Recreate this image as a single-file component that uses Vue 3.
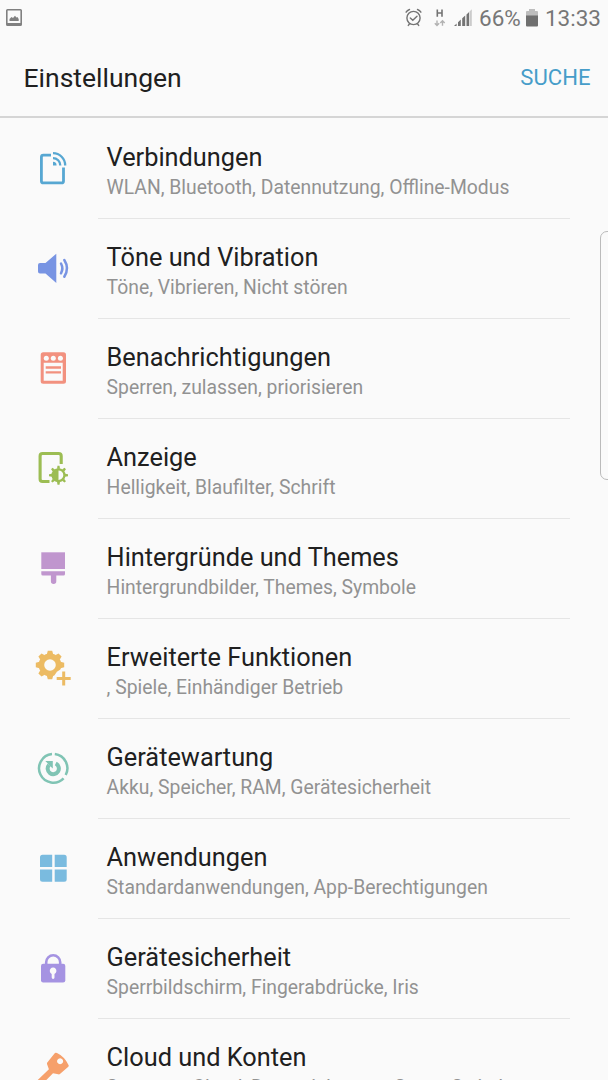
<script setup>
const entries = [
  { icon: 'connections', title: 'Verbindungen', sub: 'WLAN, Bluetooth, Datennutzung, Offline-Modus' },
  { icon: 'sound', title: 'Töne und Vibration', sub: 'Töne, Vibrieren, Nicht stören' },
  { icon: 'notifications', title: 'Benachrichtigungen', sub: 'Sperren, zulassen, priorisieren' },
  { icon: 'display', title: 'Anzeige', sub: 'Helligkeit, Blaufilter, Schrift' },
  { icon: 'themes', title: 'Hintergründe und Themes', sub: 'Hintergrundbilder, Themes, Symbole' },
  { icon: 'advanced', title: 'Erweiterte Funktionen', sub: ', Spiele, Einhändiger Betrieb' },
  { icon: 'maintenance', title: 'Gerätewartung', sub: 'Akku, Speicher, RAM, Gerätesicherheit' },
  { icon: 'apps', title: 'Anwendungen', sub: 'Standardanwendungen, App-Berechtigungen' },
  { icon: 'security', title: 'Gerätesicherheit', sub: 'Sperrbildschirm, Fingerabdrücke, Iris' },
  { icon: 'cloud', title: 'Cloud und Konten', sub: 'Samsung Cloud, Datensicherung, Smart Switch' },
]
const teeth = [0, 45, 90, 135, 180, 225, 270, 315]
</script>

<template>
  <div class="screen">
    <header class="status">
      <svg class="shot" width="16" height="18" viewBox="0 0 16 18">
        <path fill="#808080" fill-rule="evenodd" d="M1.500 0h13Q16 0 16 1.500v14Q16 17 14.500 17h-13Q0 17 0 15.500v-14Q0 0 1.500 0ZM1.600 1.500v12.500h12.800V1.500Z" />
        <path fill="#808080" d="M3.500 12V10l2-2 1.500 1 2-2.200 1.400 1.700 1-.5 1.300 2V12Z" />
      </svg>
      <svg class="signals" width="80" height="20" viewBox="0 0 80 20">
        <g fill="none" stroke="#737373" stroke-width="1.400" stroke-linecap="round">
          <circle cx="8.500" cy="10" r="6.600" />
          <path d="M5.300 9.900l2.500 2.400 4.200-4M4.600 15.700l-1.300 1.700M12.400 15.700l1.300 1.700M1.100 4.200Q2.200 2.200 4.500 1.500M12.500 1.500Q14.800 2.200 15.900 4.200" />
        </g>
        <path stroke="#737373" stroke-width="1.600" fill="none" d="M32.300 1.500v7.200M37 1.500v7.200M32.300 5h4.700" />
        <path stroke="#b2b2b2" stroke-width="1.400" fill="none" d="M32 12.500v5M29.800 15.300l2.200 2.200 2.200-2.200M37.500 17.700v-5M35.300 14.900l2.200-2.200 2.200 2.200" />
        <path fill="#737373" d="M49 18l2.600-2.500V18ZM53 14.300l2.800-2.700V18H53ZM57.200 10.300l3-2.800V18h-3ZM61.500 6.500l2.600-2.500V18h-2.600Z" />
        <path fill="#cbcbcb" d="M64.600 3.400L66.800 1.300V18h-2.200Z" />
      </svg>
      <span class="percent">66%</span>
      <svg class="battery" width="12" height="18" viewBox="0 0 12 18">
        <path fill="#bdbdbd" d="M3 0h6v2h2q1 0 1 1v4H0V3q0-1 1-1h2Z" />
        <path fill="#6f6f6f" d="M0 6.500h12V16.500q0 1-1 1H1q-1 0-1-1Z" />
      </svg>
      <span class="clock">13:33</span>
    </header>

    <div class="appbar">
      <h1>Einstellungen</h1>
      <span class="search">SUCHE</span>
    </div>

    <main>
      <section v-for="e in entries" :key="e.icon" class="row">
        <!-- icon boxes are 60px squares, 24px from the left edge -->
        <svg class="icon" width="60" height="60" viewBox="0 0 60 60">
          <g v-if="e.icon === 'connections'" fill="none" stroke="#57a7d2">
            <path stroke-width="2.800" d="M27 15.100H19.400Q17.400 15.100 17.400 17.100V40.900Q17.400 42.900 19.400 42.900H37.500Q39.500 42.900 39.500 40.900V27.500" />
            <path stroke-width="2.300" d="M29 13.200A12.200 12.200 0 0 1 41.200 25.400M29 18.100A7.300 7.300 0 0 1 36.300 25.400" />
            <path fill="#57a7d2" stroke="none" d="M29 21.800A3.600 3.600 0 0 1 32.600 25.400H29Z" />
          </g>

          <g v-else-if="e.icon === 'sound'">
            <path fill="#7894e3" d="M16 23h5.500L32.300 13.700V43L21.500 33.500H16q-2 0-2-2V25q0-2 2-2Z" />
            <path fill="none" stroke="#7894e3" stroke-width="2.500" stroke-linecap="round" d="M37 23.500Q39.700 28.400 37 33.300M40.300 20Q45.700 28.400 40.300 36.800" />
          </g>

          <g v-else-if="e.icon === 'notifications'">
            <path fill="#f2917f" fill-rule="evenodd" d="M19.200 12.300h20.300q2.500 0 2.500 2.500v26.400q0 2.500-2.500 2.500H19.200q-2.500 0-2.500-2.500V14.800q0-2.500 2.500-2.500ZM19.700 22.800v18h19v-18Z" />
            <g fill="#fafafa"><circle cx="22.300" cy="18.300" r="2.500" /><circle cx="29.300" cy="18.300" r="2.500" /><circle cx="36.400" cy="18.300" r="2.500" /></g>
            <path stroke="#f2917f" stroke-width="2.300" d="M21.700 27.500h15.300M21.700 32.400h15.300" />
          </g>

          <g v-else-if="e.icon === 'display'">
            <path fill="none" stroke="#9cbd53" stroke-width="3.100" d="M25.500 41.500H18.500Q16.100 41.500 16.100 39V16Q16.100 13.500 18.500 13.500H34.700Q37.200 13.500 37.200 16V24" />
            <g transform="translate(34.500 35.200)">
              <circle r="5.900" fill="none" stroke="#9cbd53" stroke-width="2.200" />
              <path fill="#9cbd53" d="M0-6A6 6 0 0 0 0 6Z" />
              <path v-for="a in teeth" :key="a" :transform="`rotate(${a})`" fill="#9cbd53" d="M-1.500-6.500L-1-9.500H1L1.500-6.500Z" />
            </g>
          </g>

          <g v-else-if="e.icon === 'themes'" fill="#c096ce">
            <path d="M17.300 12.300H41V29H17.300Z" />
            <path d="M17.300 31.300H41V34q0 1.500-1.500 1.500H32.300V41.300a2.700 2.700 0 0 1-5.400 0V35.500H18.800q-1.500 0-1.500-1.500Z" />
          </g>

          <g v-else-if="e.icon === 'advanced'">
            <g transform="translate(26 25)">
              <circle r="8.600" fill="none" stroke="#ecbb63" stroke-width="5.600" />
              <path v-for="a in teeth" :key="a" :transform="`rotate(${a})`" fill="#ecbb63" d="M-3.200-10.500L-2.200-14.200H2.200L3.200-10.500Z" />
            </g>
            <circle cx="39.700" cy="38.500" r="9.600" fill="#fafafa" />
            <path stroke="#ecbb63" stroke-width="3" d="M39.700 31.500v14M32.700 38.500h14" />
          </g>

          <g v-else-if="e.icon === 'maintenance'" fill="none" stroke="#80c4b4">
            <path stroke-width="2.500" d="M30.800 14.100A14.300 14.300 0 0 1 41.700 35M39.600 38.300A14.300 14.300 0 1 1 28 14.100" />
            <path stroke-width="4" d="M31.700 23.500A5.600 5.600 0 1 1 25.100 24.800" />
            <path fill="#80c4b4" stroke="none" d="M21.300 21H28.800V28.600L26 26 23.800 23.600Z" />
          </g>

          <path v-else-if="e.icon === 'apps'" fill="#7abbdf" d="M18.500 14.700H28.200V27H16V17.200Q16 14.700 18.500 14.700ZM30.700 14.700H40.200Q42.700 14.700 42.700 17.200V27H30.700ZM16 29.600H28.200V41.800H18.500Q16 41.800 16 39.300ZM30.700 29.600H42.700V39.300Q42.700 41.800 40.200 41.800H30.700Z" />

          <g v-else-if="e.icon === 'security'">
            <path fill="none" stroke="#a593e2" stroke-width="2.600" d="M22.200 25V22.300A7 7 0 0 1 36.200 22.300V25" />
            <rect x="17" y="23.800" width="24.300" height="18.600" rx="2.200" fill="#a593e2" />
            <path fill="#fafafa" d="M27.700 33.900A3.300 3.300 0 1 1 30.500 33.900V37.600a1.400 1.400 0 0 1-2.800 0Z" />
          </g>

          <path v-else fill="#f6a06b" fill-rule="evenodd" d="M31.600 12.700Q32.200 12.500 33 13 40.500 16.500 44.500 25 45 25.900 44.300 26.700L36.200 33.800Q35.300 34.600 34.300 34.300L29 33.200 14.500 48 7.500 46 24.900 29.300 23 24Q22.900 23.200 23.300 22.600L30.500 13.500Q31 12.900 31.600 12.700ZM36.100 18.300a3 3 0 1 0 .01 0Z" />
        </svg>
        <div class="text">
          <h2>{{ e.title }}</h2>
          <p>{{ e.sub }}</p>
        </div>
      </section>
    </main>
    <div class="edge"></div>
  </div>
</template>

<style>
body { background: #fafafa; }
</style>

<style scoped>
.screen {
  position: relative;
  width: 608px;
  height: 1080px;
  overflow: hidden;
  background: #fafafa;
  font-family: Roboto, "Liberation Sans", sans-serif;
  color: #202020;
}
.status {
  display: flex;
  height: 38px;
  box-sizing: border-box;
  padding: 8px 7px 0 6px;
  color: #777;
  font-size: 22.500px;
  line-height: 20px;
}
.shot { margin-top: 1px; }
.signals { margin-left: 383px; flex: none; }
.percent { margin-left: -6px; width: 46px; flex: none; }
.battery { margin-left: 1px; margin-top: 1px; flex: none; }
.clock { margin-left: auto; }
.appbar {
  display: flex;
  justify-content: space-between;
  align-items: center;
  height: 80px;
  box-sizing: border-box;
  padding: 2px 17.500px 0 23.500px;
  border-bottom: 2px solid #d5d5d5;
}
h1 { margin: 0; font-size: 26.500px; font-weight: 400; line-height: 32px; }
.search { margin-bottom: 2px; font-size: 22.100px; line-height: 28px; color: #469dc9; }
.row { display: flex; height: 100px; padding-left: 24px; }
.icon { margin-top: 22px; flex: none; }
.text {
  width: 471.500px;
  height: 101px;
  margin-left: 14px;
  padding: 25px 0 0 8.600px;
  box-sizing: border-box;
  border-bottom: 1px solid #e5e5e5;
  white-space: nowrap;
}
h2 { margin: 0; font-size: 25.330px; font-weight: 400; line-height: 30px; }
p { margin: 0; font-size: 19.330px; line-height: 30px; color: #929292; }
.edge {
  position: absolute;
  left: 600px;
  top: 231px;
  width: 20px;
  height: 249px;
  box-sizing: border-box;
  border: 1px solid #bbb;
  border-radius: 7px;
}
</style>
